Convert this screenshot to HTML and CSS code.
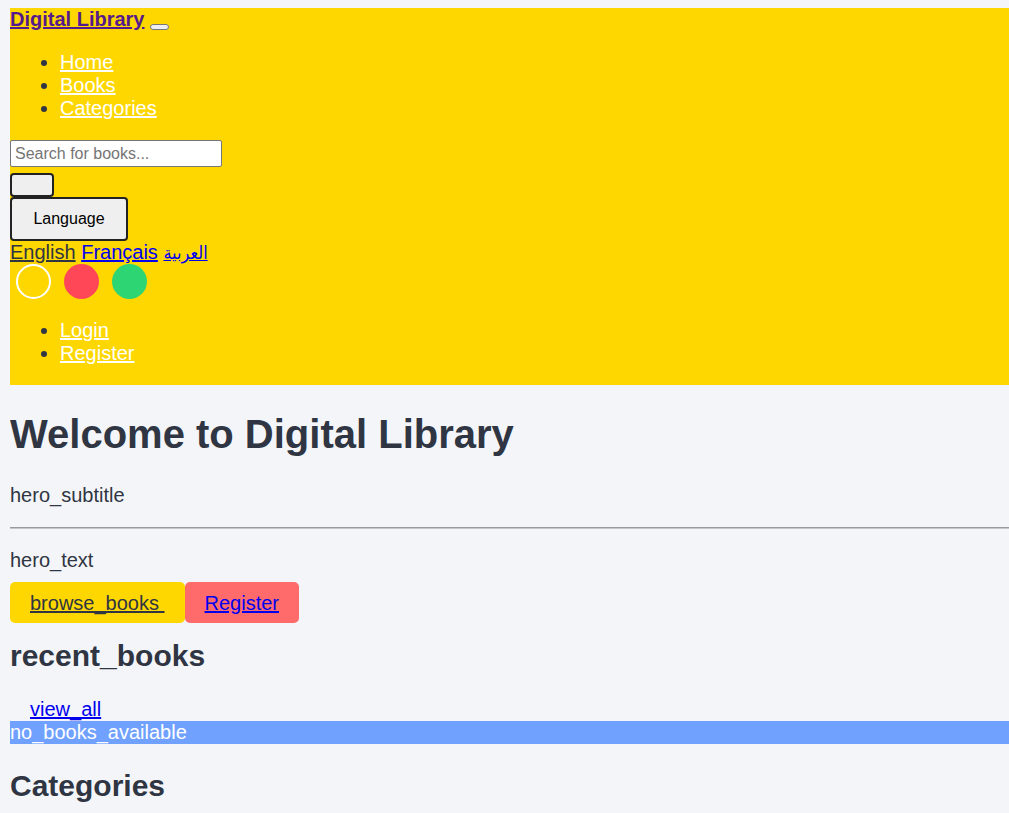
FILE: index.html
```html
<!DOCTYPE html>
<html lang="en">
<head>
<meta charset="utf-8">
<title>Digital Library</title>
<link rel="stylesheet" href="styles.css">
</head>
<body>
<header class="navbar">
  <div class="brand-row"><a class="brand" href="#">Digital Library</a> <button class="toggler" type="button"></button></div>
  <ul class="nav-list">
    <li><a href="#">Home</a></li>
    <li><a href="#">Books</a></li>
    <li><a href="#">Categories</a></li>
  </ul>
  <form class="search">
    <input class="search-input" type="text" placeholder="Search for books...">
    <button class="search-btn" type="button"></button>
  </form>
  <div class="lang">
    <button class="lang-btn" type="button">Language</button>
    <div class="lang-links"><a class="lang-active" href="#">English</a> <a class="lang-link" href="#">Français</a> <a class="lang-link lang-ar" href="#" dir="rtl">العربية</a></div>
  </div>
  <div class="themes">
    <span class="dot dot-outline"></span>
    <span class="dot dot-red"></span>
    <span class="dot dot-green"></span>
  </div>
  <ul class="nav-list">
    <li><a href="#">Login</a></li>
    <li><a href="#">Register</a></li>
  </ul>
</header>
<main class="content">
  <section class="hero">
    <h1 class="hero-title">Welcome to Digital Library</h1>
    <p class="text">hero_subtitle</p>
    <hr class="divider">
    <p class="text">hero_text</p>
    <div class="hero-actions"><a class="btn btn-yellow" href="#">browse_books </a><a class="btn btn-red" href="#">Register</a></div>
  </section>
  <section class="recent">
    <h2 class="section-title">recent_books</h2>
    <div class="view-all"><a class="view-all-link" href="#">view_all</a></div>
    <div class="empty">no_books_available</div>
  </section>
  <section class="categories">
    <h2 class="section-title">Categories</h2>
  </section>
</main>
</body>
</html>
```
FILE: styles.css
```css
html {
  background: #f4f5f9;
}
body {
  margin: 8px 0 0 10px;
  font-family: "Liberation Sans", Arial, "DejaVu Sans", sans-serif;
  font-size: 20px;
  line-height: normal;
  color: #2f3542;
  background: #f4f5f9;
}
.navbar {
  display: flow-root;
  background: #ffd700;
}
.brand-row {
  line-height: 23px;
}
.brand {
  font-weight: bold;
  color: #551a8b;
}
.toggler {
  display: inline-block;
  width: 19px;
  height: 6px;
  padding: 0;
  margin: 0;
  background: #efefef;
  border: 1px solid #767676;
  border-radius: 3px;
  vertical-align: -3px;
}
.nav-list {
  margin: 20px 0;
  padding-left: 50px;
}
.nav-list a {
  color: #ffffff;
}
.search {
  display: flex;
  flex-direction: column;
  align-items: flex-start;
  gap: 6px;
  margin: 0;
}
.search-input {
  box-sizing: border-box;
  width: 212px;
  height: 27px;
  margin: 0;
  padding: 2px 4px;
  font-family: "Liberation Sans", Arial, sans-serif;
  font-size: 16px;
  border: 1px solid #767676;
  border-radius: 2px;
  background: #ffffff;
}
.search-input::placeholder {
  color: #757575;
}
.search-btn {
  box-sizing: border-box;
  width: 44px;
  height: 24px;
  margin: 0;
  padding: 0;
  background: #efefef;
  border: 2px solid #222222;
  border-radius: 4px;
}
.lang-btn {
  display: block;
  box-sizing: border-box;
  width: 118px;
  height: 44px;
  margin: 0;
  padding: 0;
  font-family: "Liberation Sans", Arial, sans-serif;
  font-size: 16px;
  color: #000000;
  background: #efefef;
  border: 2px solid #222222;
  border-radius: 4px;
}
.lang-links {
  line-height: 23px;
}
.lang-active {
  color: #2f3542;
}
.lang-link {
  color: #0000ee;
}
.lang-ar {
  font-family: "DejaVu Sans Condensed", "DejaVu Sans", sans-serif;
  font-size: 18px;
}
.themes {
  display: flex;
  gap: 13px;
  padding-left: 6px;
}
.dot {
  box-sizing: border-box;
  width: 35px;
  height: 35px;
  border-radius: 50%;
}
.dot-outline {
  border: 2px solid #ffffff;
}
.dot-red {
  background: #ff4757;
}
.dot-green {
  background: #2ed573;
}
.hero-title {
  font-size: 40px;
  font-weight: bold;
  margin: 26.8px 0;
}
.text {
  margin: 20px 0;
}
.divider {
  margin: 10px 0;
  border: 0;
  border-top: 1px solid #9a9a9a;
  border-bottom: 1px solid #c8c8c8;
}
.btn {
  padding: 9.5px 20px;
  border-radius: 5px;
}
.btn-yellow {
  background: #ffd700;
  color: #2f3542;
}
.btn-red {
  background: #ff6b6b;
  color: #0000ee;
}
.section-title {
  font-size: 30px;
  font-weight: bold;
  margin: 24.9px 0;
}
.view-all {
  padding-left: 20px;
}
.view-all-link {
  color: #0000ee;
}
.empty {
  background: #70a1ff;
  color: #ffffff;
}
```
